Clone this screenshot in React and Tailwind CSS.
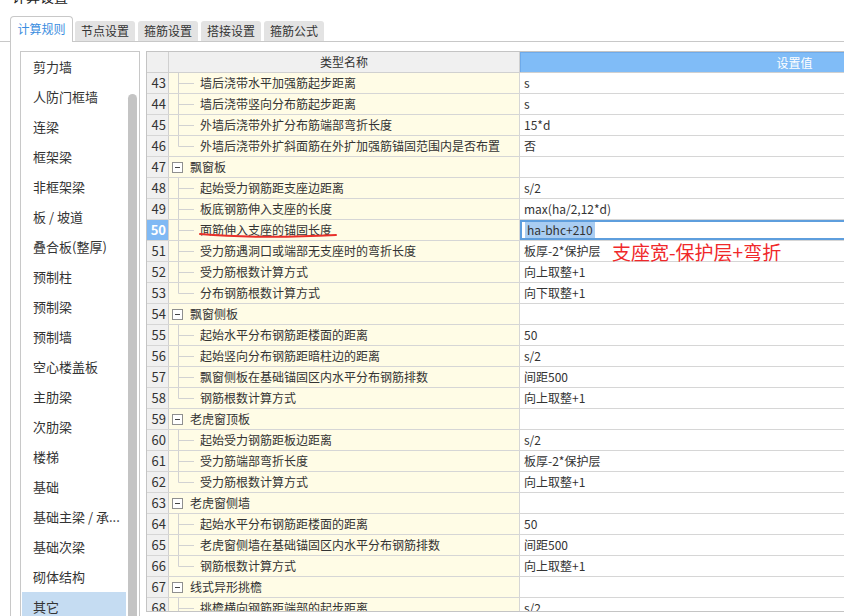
import React from 'react';

const listItems = [
  '剪力墙', '人防门框墙', '连梁', '框架梁', '非框架梁', '板 / 坡道', '叠合板(整厚)', '预制柱', '预制梁', '预制墙',
  '空心楼盖板', '主肋梁', '次肋梁', '楼梯', '基础', '基础主梁 / 承...', '基础次梁', '砌体结构', '其它',
];

const rows = [
  { n: 43, t: 'c', name: '墙后浇带水平加强筋起步距离', v: 's' },
  { n: 44, t: 'c', name: '墙后浇带竖向分布筋起步距离', v: 's' },
  { n: 45, t: 'c', name: '外墙后浇带外扩分布筋端部弯折长度', v: '15*d' },
  { n: 46, t: 'l', name: '外墙后浇带外扩斜面筋在外扩加强筋锚固范围内是否布置', v: '否' },
  { n: 47, t: 'g', name: '飘窗板', v: '' },
  { n: 48, t: 'c', name: '起始受力钢筋距支座边距离', v: 's/2' },
  { n: 49, t: 'c', name: '板底钢筋伸入支座的长度', v: 'max(ha/2,12*d)' },
  { n: 50, t: 'c', name: '面筋伸入支座的锚固长度', v: 'ha-bhc+210', sel: true },
  { n: 51, t: 'c', name: '受力筋遇洞口或端部无支座时的弯折长度', v: '板厚-2*保护层' },
  { n: 52, t: 'c', name: '受力筋根数计算方式', v: '向上取整+1' },
  { n: 53, t: 'l', name: '分布钢筋根数计算方式', v: '向下取整+1' },
  { n: 54, t: 'g', name: '飘窗侧板', v: '' },
  { n: 55, t: 'c', name: '起始水平分布钢筋距楼面的距离', v: '50' },
  { n: 56, t: 'c', name: '起始竖向分布钢筋距暗柱边的距离', v: 's/2' },
  { n: 57, t: 'c', name: '飘窗侧板在基础锚固区内水平分布钢筋排数', v: '间距500' },
  { n: 58, t: 'l', name: '钢筋根数计算方式', v: '向上取整+1' },
  { n: 59, t: 'g', name: '老虎窗顶板', v: '' },
  { n: 60, t: 'c', name: '起始受力钢筋距板边距离', v: 's/2' },
  { n: 61, t: 'c', name: '受力筋端部弯折长度', v: '板厚-2*保护层' },
  { n: 62, t: 'l', name: '受力筋根数计算方式', v: '向上取整+1' },
  { n: 63, t: 'g', name: '老虎窗侧墙', v: '' },
  { n: 64, t: 'c', name: '起始水平分布钢筋距楼面的距离', v: '50' },
  { n: 65, t: 'c', name: '老虎窗侧墙在基础锚固区内水平分布钢筋排数', v: '间距500' },
  { n: 66, t: 'l', name: '钢筋根数计算方式', v: '向上取整+1' },
  { n: 67, t: 'g', name: '线式异形挑檐', v: '' },
  { n: 68, t: 'c', name: '挑檐横向钢筋距端部的起步距离', v: 's/2' },
];

function TreeLine({ last }) {
  return (
    <svg width="31" height="21" className="shrink-0 self-start">
      <line x1="9.5" y1="0" x2="9.5" y2={last ? 10.5 : 21} stroke="#d2d2d2" strokeWidth="1" />
      <line x1="9.5" y1="10.5" x2="25" y2="10.5" stroke="#d2d2d2" strokeWidth="1" />
    </svg>
  );
}

function GroupBox() {
  return (
    <svg width="11" height="11" className="shrink-0 ml-[3px] mr-[7px]">
      <rect x="0.5" y="0.5" width="10" height="10" fill="#fff" stroke="#8f8f8f" />
      <line x1="3" y1="5.5" x2="8" y2="5.5" stroke="#444" strokeWidth="1" />
    </svg>
  );
}

export default function App() {
  return (
    <div className="w-[844px] h-[616px] overflow-hidden bg-white text-[#333] font-['Noto_Sans_CJK_SC','Microsoft_YaHei',sans-serif]">
      <div className="-mt-[12px] h-[16px] pl-[12px] text-[14px] leading-[16px] text-[#222]">计算设置</div>

      {/* Tabs */}
      <div className="mt-[12px] flex items-end h-[26px] border-b border-[#c8c8c8] pl-[10px] text-[12px]">
        <div className="relative -mb-px h-[26px] w-[63px] bg-white border border-b-0 border-[#c8c8c8] rounded-t-[4px] flex items-center justify-center text-[#3a8de0] pb-[1px]">
          计算规则
        </div>
        <div className="ml-[2px] h-[20px] w-[60px] bg-[#e3e3e3] rounded-t-[3px] flex items-center justify-center">节点设置</div>
        <div className="ml-[3px] h-[20px] w-[60px] bg-[#e3e3e3] rounded-t-[3px] flex items-center justify-center">箍筋设置</div>
        <div className="ml-[3px] h-[20px] w-[60px] bg-[#e3e3e3] rounded-t-[3px] flex items-center justify-center">搭接设置</div>
        <div className="ml-[3px] h-[20px] w-[60px] bg-[#e3e3e3] rounded-t-[3px] flex items-center justify-center">箍筋公式</div>
      </div>

      {/* Panel */}
      <div className="ml-[10px] border-l border-[#c8c8c8] pt-[9px] pl-[9px] flex gap-[6px] h-[600px]">
        {/* Left list */}
        <div className="w-[120px] h-[580px] shrink-0 border border-[#c8c8c8] flex overflow-hidden">
          <div className="ml-[1px] w-[104px] flex flex-col">
            {listItems.map((it) => (
              <div
                key={it}
                className={`h-[30px] shrink-0 pl-[11px] flex items-center text-[13px] whitespace-nowrap ${it === '其它' ? 'bg-[#c5dcf2]' : ''}`}
              >
                {it}
              </div>
            ))}
          </div>
          <div className="w-[13px] shrink-0">
            <div className="ml-[2px] mt-[42px] w-[9px] h-[600px] rounded-full bg-[#c4c4c4]" />
          </div>
        </div>

        {/* Grid */}
        <div className="relative w-[922px] h-[561px] shrink-0 border border-[#c4c4c4] overflow-hidden text-[12px]">
          <div className="flex h-[21px] border-b border-[#d0d0d0]">
            <div className="w-[22px] shrink-0 border-r border-[#d0d0d0] bg-[#f0f0f0]" />
            <div className="w-[351px] shrink-0 border-r border-[#d0d0d0] bg-[#f0f0f0] flex items-center justify-center">类型名称</div>
            <div className="w-[548px] shrink-0 bg-[#80bcf7] border-t border-l border-[#6eaaea] flex items-center justify-center text-white">设置值</div>
          </div>
          {rows.map((r) => (
            <div key={r.n} className="flex h-[21px] border-b border-[#d6d6d6]">
              <div
                className={`w-[22px] shrink-0 border-r border-[#d0d0d0] flex items-center justify-end pr-[2px] text-[13px] ${r.sel ? 'bg-[#80b9f4] text-white font-bold' : 'bg-[#f0f0f0]'}`}
              >
                {r.n}
              </div>
              <div className="w-[351px] shrink-0 border-r border-[#d6d6d6] bg-[#fffce6] flex items-center whitespace-nowrap overflow-hidden">
                {r.t === 'g' ? <GroupBox /> : <TreeLine last={r.t === 'l'} />}
                <span>{r.name}</span>
              </div>
              {r.sel ? (
                <div className="w-[548px] shrink-0 border-2 border-[#5e9edd] flex items-center pl-[3px]">
                  <span className="bg-[#a9cdf2] px-[2px] leading-[16px]">{r.v}</span>
                </div>
              ) : (
                <div className="w-[548px] shrink-0 flex items-center pl-[4px] whitespace-nowrap">{r.v}</div>
              )}
            </div>
          ))}

          {/* Annotations */}
          <svg className="absolute left-[51px] top-[179px]" width="142" height="10">
            <path d="M2 3 Q 60 8 138 4" fill="none" stroke="#e8302a" strokeWidth="2" strokeLinecap="round" />
          </svg>
          <div className="absolute left-[465px] top-[188px] text-[19px] leading-[24px] text-[#f0282a] whitespace-nowrap">
            支座宽-保护层+弯折
          </div>
        </div>
      </div>
    </div>
  );
}
